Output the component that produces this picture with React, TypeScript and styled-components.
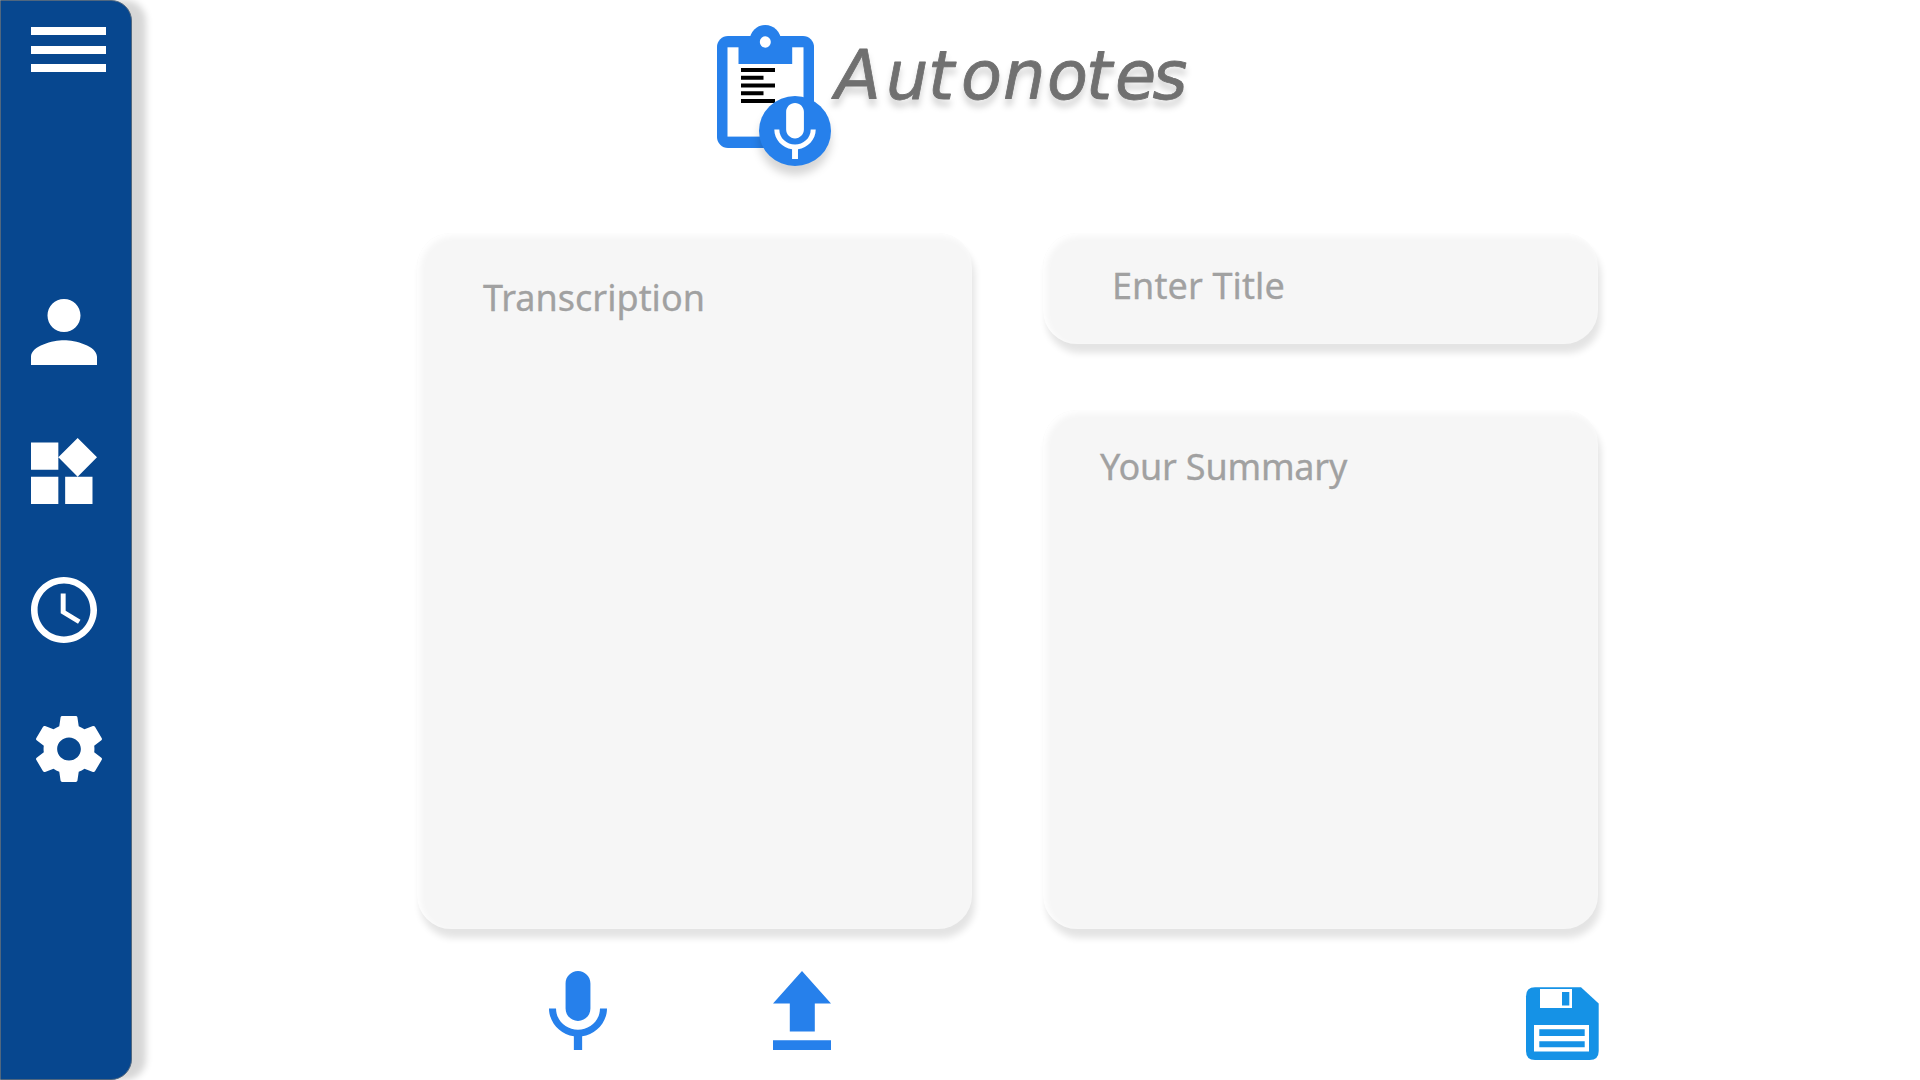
import React from 'react';
import styled, { createGlobalStyle } from 'styled-components';

const BLUE = '#2680eb';

const GlobalStyle = createGlobalStyle`
  * { box-sizing: border-box; }
  body { margin: 0; background: #fff; overflow: hidden; }
  svg { display: block; flex: none; overflow: visible; }
`;

const Page = styled.div`
  display: flex;
  width: 1920px;
  height: 1080px;
  background: #fff;
  font-family: 'Noto Sans', 'Open Sans', sans-serif;
`;

const Sidebar = styled.nav`
  display: flex;
  flex-direction: column;
  flex: none;
  width: 132px;
  height: 1080px;
  padding: 26px 0 0 30px;
  background: #07478f;
  border: 1px solid #50677f;
  border-radius: 0 21px 21px 0;
  box-shadow: 14px 0 7px rgba(0, 0, 0, 0.16);
`;

const IconButton = styled.button<{ $w: number; $h: number; $indent?: number }>`
  display: block;
  flex: none;
  width: ${(p) => p.$w}px;
  height: ${(p) => p.$h}px;
  margin: 0 0 0 ${(p) => p.$indent ?? 0}px;
  padding: 0;
  border: 0;
  background: none;
`;

const MenuButton = styled.button`
  display: flex;
  flex-direction: column;
  justify-content: space-between;
  width: 75px;
  height: 45px;
  padding: 0;
  border: 0;
  background: none;
`;

const MenuBar = styled.span`
  height: 8px;
  background: #fff;
`;

const NavList = styled.div`
  display: flex;
  flex-direction: column;
  gap: 73px;
  margin-top: 227px;
`;

const Main = styled.main`
  display: flex;
  flex-direction: column;
  flex: 1;
  padding-left: 285px;
`;

const Header = styled.header`
  height: 233px;
  padding: 25px 0 0 300px;
`;

const Workspace = styled.section`
  display: flex;
  gap: 71px;
`;

const Column = styled.div`
  display: flex;
  flex-direction: column;
  gap: 66px;
  width: 555px;
`;

const Card = styled.div<{ $h: number; $top: number; $left: number }>`
  height: ${(p) => p.$h}px;
  padding: ${(p) => p.$top}px 0 0 ${(p) => p.$left}px;
  background: #f6f6f6;
  border-radius: 34px;
  box-shadow: 3px 9px 7px rgba(0, 0, 0, 0.11), inset 3px 3px 6px #fff;
`;

const Placeholder = styled.span<{ $track: number }>`
  display: block;
  color: #a1a1a1;
  font-size: 36px;
  line-height: 48px;
  letter-spacing: ${(p) => p.$track}px;
  white-space: nowrap;
  -webkit-text-stroke: 0.3px #a1a1a1;
`;

const Actions = styled.footer`
  display: flex;
  align-items: flex-start;
  padding: 42px 0 0 132px;
`;

const UploadSlot = styled.div`
  margin-left: 166px;
`;

const SaveSlot = styled.div`
  margin: 16px 0 0 695px;
`;

const MIC =
  'M12 14c1.66 0 3-1.34 3-3V5c0-1.66-1.34-3-3-3S9 3.34 9 5v6c0 1.66 1.34 3 3 3zM17.3 11c0 3-2.54 5.1-5.3 5.1S6.7 14 6.7 11H5c0 3.41 2.72 6.23 6 6.72V21h2v-3.28c3.28-.48 6-3.3 6-6.72h-1.7z';
const PERSON =
  'M12 12c2.21 0 4-1.79 4-4s-1.79-4-4-4-4 1.79-4 4 1.79 4 4 4zm0 2c-2.67 0-8 1.34-8 4v2h16v-2c0-2.66-5.33-4-8-4z';
const WIDGETS =
  'M13 13v8h8v-8h-8zM3 21h8v-8H3v8zM3 3v8h8V3H3zm13.66-1.31L11 7.34 16.66 13l5.66-5.66-5.66-5.65z';
const CLOCK =
  'M11.99 2C6.47 2 2 6.48 2 12s4.47 10 9.99 10C17.52 22 22 17.52 22 12S17.52 2 11.99 2zM12 20c-4.42 0-8-3.58-8-8s3.58-8 8-8 8 3.58 8 8-3.58 8-8 8zm.5-13H11v6l5.25 3.15.75-1.23-4.5-2.67z';
const GEAR =
  'M19.43 12.98c.04-.32.07-.64.07-.98s-.03-.66-.07-.98l2.11-1.65c.19-.15.24-.42.12-.64l-2-3.46c-.12-.22-.39-.3-.61-.22l-2.49 1c-.52-.4-1.08-.73-1.69-.98l-.38-2.65C14.46 2.18 14.25 2 14 2h-4c-.25 0-.46.18-.49.42l-.38 2.65c-.61.25-1.17.59-1.69.98l-2.49-1c-.23-.09-.49 0-.61.22l-2 3.46c-.13.22-.07.49.12.64l2.11 1.65c-.04.32-.07.65-.07.98s.03.66.07.98l-2.11 1.65c-.19.15-.24.42-.12.64l2 3.46c.12.22.39.3.61.22l2.49-1c.52.4 1.08.73 1.69.98l.38 2.65c.03.24.24.42.49.42h4c.25 0 .46-.18.49-.42l.38-2.65c.61-.25 1.17-.59 1.69-.98l2.49 1c.23.09.49 0 .61-.22l2-3.46c.12-.22.07-.49-.12-.64l-2.11-1.65zM12 15.5c-1.93 0-3.5-1.57-3.5-3.5s1.57-3.5 3.5-3.5 3.5 1.57 3.5 3.5-1.57 3.5-3.5 3.5z';

const NAV = [
  { name: 'Profile', path: PERSON, box: '4 4 16 16', indent: 0 },
  { name: 'Dashboard', path: WIDGETS, box: '3 1.69 19.32 19.31', indent: 0 },
  { name: 'History', path: CLOCK, box: '2 2 20 20', indent: 0 },
  { name: 'Settings', path: GEAR, box: '2.27 2 19.46 20', indent: 5 },
];

const Shape = styled.svg`
  width: 100%;
  height: 100%;
`;

const LogoSvg = styled.svg`
  width: 480px;
  height: 150px;
`;

const Badge = styled.g`
  filter: drop-shadow(0 9px 4px rgba(0, 0, 0, 0.16));
`;

const Wordmark = styled.text`
  font-family: 'DejaVu Sans', 'Open Sans', sans-serif;
  font-style: italic;
  font-weight: 400;
  font-size: 67px;
  fill: #707070;
  stroke: #707070;
  stroke-width: 0.8px;
  stroke-linejoin: round;
  filter: drop-shadow(0 7px 3px rgba(0, 0, 0, 0.16));
`;

/* The viewBox starts at the logo's corner on the page, so shapes use page units. */
const Logo = () => (
  <LogoSvg viewBox="717 25 480 150">
    <circle cx="765.3" cy="40.5" r="15.5" fill={BLUE} />
    <rect x="717" y="36" width="97" height="112" rx="11" fill={BLUE} />
    <rect x="727.5" y="47.3" width="76" height="89.3" fill="#fff" />
    <rect x="738.5" y="46" width="53.7" height="18" fill={BLUE} />
    <ellipse cx="765.3" cy="42" rx="5.5" ry="5.7" fill="#fff" />
    {[34, 22.5, 34, 22.5, 34].map((w, i) => (
      <rect key={i} x="741" y={68 + i * 7.75} width={w} height="4" fill="#000" />
    ))}
    <Badge>
      <ellipse cx="795" cy="131" rx="36" ry="35" fill={BLUE} />
    </Badge>
    <path d={MIC} fill="#fff" transform="translate(759.5 97.1) scale(2.96 2.95)" />
    <Wordmark x="835 886 928 961 1003 1047 1086 1115 1152.5" y="99">
      Autonotes
    </Wordmark>
  </LogoSvg>
);

const App = () => (
  <Page>
    <GlobalStyle />
    <Sidebar>
      <MenuButton aria-label="Menu">
        <MenuBar />
        <MenuBar />
        <MenuBar />
      </MenuButton>
      <NavList>
        {NAV.map((n) => (
          <IconButton key={n.name} aria-label={n.name} $w={66} $h={66} $indent={n.indent}>
            <Shape viewBox={n.box} preserveAspectRatio="none">
              <path d={n.path} fill="#fff" />
            </Shape>
          </IconButton>
        ))}
      </NavList>
    </Sidebar>
    <Main>
      <Header>
        <Logo />
      </Header>
      <Workspace>
        <Column>
          <Card $h={696} $top={41} $left={66}>
            <Placeholder $track={0}>Transcription</Placeholder>
          </Card>
        </Column>
        <Column>
          <Card $h={111} $top={29} $left={69}>
            <Placeholder $track={0.1}>Enter Title</Placeholder>
          </Card>
          <Card $h={519} $top={33} $left={57}>
            <Placeholder $track={-0.2}>Your Summary</Placeholder>
          </Card>
        </Column>
      </Workspace>
      <Actions>
        <IconButton aria-label="Record" $w={58} $h={79}>
          <Shape viewBox="5 2 14 19" preserveAspectRatio="none">
            <path d={MIC} fill={BLUE} />
          </Shape>
        </IconButton>
        <UploadSlot>
          <IconButton aria-label="Upload" $w={58} $h={79}>
            <Shape viewBox="0 0 58 79">
              <path
                d="M29 0 58 32.5H41.8V60.5H16.8V32.5H0zM0 69.3H58V79H0z"
                fill={BLUE}
              />
            </Shape>
          </IconButton>
        </UploadSlot>
        <SaveSlot>
          <IconButton aria-label="Save" $w={73} $h={73}>
            <Shape viewBox="0 0 73 73">
              <path
                d="M9 0.3H55L72.7 16.5V64Q72.7 73 63.7 73H9Q0 73 0 64V9.3Q0 0.3 9 0.3z"
                fill="#1592e6"
              />
              <path d="M14 2H46V21H14zM8 38H63V64.5H8z" fill="#fff" />
              <path
                d="M36 5H43.3V18.5H36zM13.3 42.2H58.7V49H13.3zM13.3 54.2H58.7V60.3H13.3z"
                fill="#1592e6"
              />
            </Shape>
          </IconButton>
        </SaveSlot>
      </Actions>
    </Main>
  </Page>
);

export default App;
